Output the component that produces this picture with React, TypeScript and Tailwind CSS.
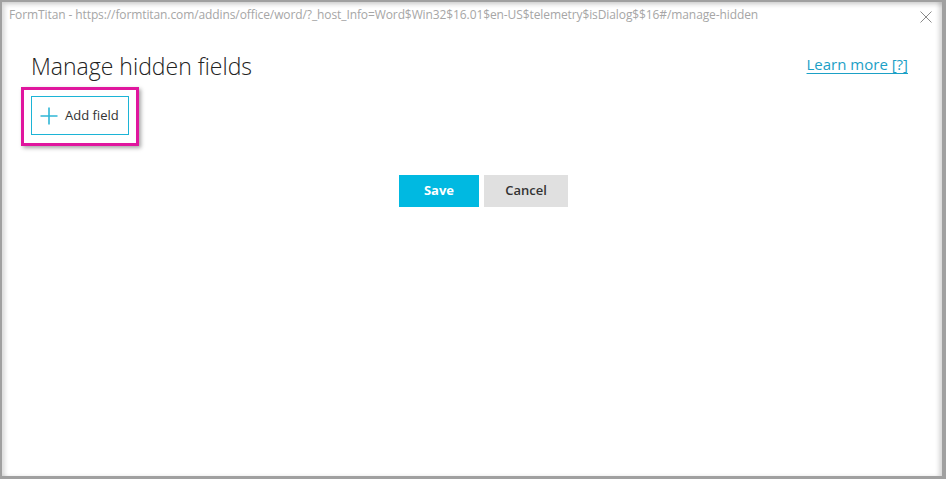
import React from "react";

const font = { fontFamily: '"Open Sans", "Noto Sans", Arial, sans-serif' };

function CloseIcon() {
  return (
    <svg width="12" height="12" viewBox="0 0 12 12" className="text-[#8a8a8a]">
      <path d="M0.5 0.5 L11.5 11.5 M11.5 0.5 L0.5 11.5" stroke="currentColor" strokeWidth="1" fill="none" />
    </svg>
  );
}

function PlusIcon() {
  return (
    <svg width="18" height="18" viewBox="0 0 18 18" className="text-[#2fb6d6]">
      <path d="M9 0.5 V17.5 M0.5 9 H17.5" stroke="currentColor" strokeWidth="1.6" fill="none" />
    </svg>
  );
}

export default function App() {
  return (
    <div
      className="w-[946px] h-[479px] bg-[#a0a0a0] pt-[2px] pl-[2px] pr-[4px] pb-[3px]"
      style={font}
    >
      <div className="w-full h-full bg-white flex flex-col shadow-[inset_4px_4px_4px_-1px_rgba(0,0,0,0.14),inset_-4px_0_4px_-1px_rgba(0,0,0,0.16)]">
        {/* Dialog title bar */}
        <div className="h-[30px] flex items-start pl-[7px] pr-[10px] pt-[5px]">
          <span className="flex-1 text-[12px] leading-[16px] text-[#a6a6a6] tracking-[-0.1px] whitespace-nowrap">
            FormTitan - https://formtitan.com/addins/office/word/?_host_Info=Word$Win32$16.01$en-US$telemetry$isDialog$$16#/manage-hidden
          </span>
          <span className="pt-[4px]">
            <CloseIcon />
          </span>
        </div>

        {/* Header */}
        <div className="flex items-start justify-between pl-[29px] pr-[34px] pt-[19px]">
          <h1 className="text-[23px] leading-[30px] font-light text-[#222]">Manage hidden fields</h1>
          <a href="#" className="mt-[3px] text-[15px] leading-[20px] text-[#1ba0c6] underline underline-offset-[3px]">
            Learn more [?]
          </a>
        </div>

        {/* Add field, highlighted */}
        <div className="pl-[19px] pt-[6px]">
          <div className="inline-block border-[3px] border-[#e0169e] px-[7px] pt-[6px] pb-[8px] shadow-[2px_2px_4px_rgba(0,0,0,0.35)]">
            <button className="flex items-center gap-[7px] h-[39px] w-[98px] pl-[8px] border border-[#1cb4d6] bg-white">
              <PlusIcon />
              <span className="text-[13px] text-[#333]">Add field</span>
            </button>
          </div>
        </div>

        {/* Actions */}
        <div className="flex justify-center gap-[5px] pt-[29px] pl-[23px]">
          <button className="w-[80px] h-[32px] bg-[#00b9e1] text-white text-[13px] font-bold">Save</button>
          <button className="w-[84px] h-[32px] bg-[#e0e0e0] text-[#333] text-[13px] font-semibold">Cancel</button>
        </div>
      </div>
    </div>
  );
}
